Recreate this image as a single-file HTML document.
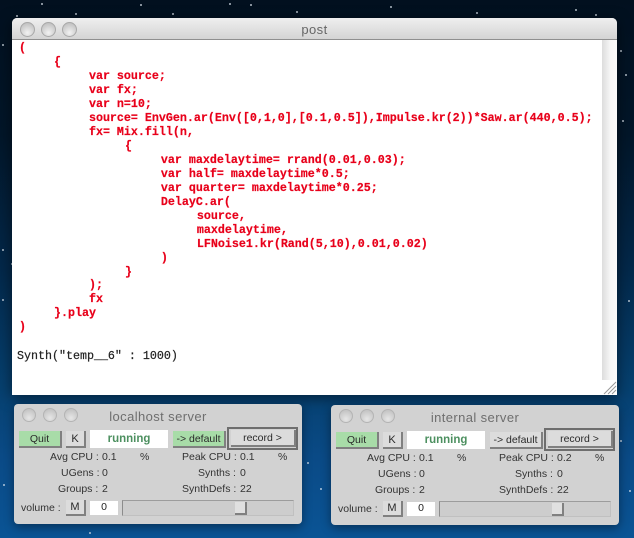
<!DOCTYPE html>
<html><head><meta charset="utf-8"><style>
html,body{margin:0;padding:0}
body{width:634px;height:538px;overflow:hidden;position:relative;font-family:"Liberation Sans",sans-serif;
background:linear-gradient(180deg,#02101f 0%,#021629 25%,#03284a 50%,#06406f 72%,#0a4a86 85%,#0a5495 100%)}
div{position:absolute;box-sizing:border-box}
.star{width:2px;height:2px;background:#dfe8f0;opacity:.6}
.post{left:12px;top:18px;width:605px;height:377px;background:#fff;border-radius:5px 5px 0 0;box-shadow:0 3px 14px rgba(0,0,0,.5)}
.tb{left:0;top:0;width:605px;height:22px;background:linear-gradient(#efefef,#d4d4d4);border-bottom:1px solid #8f8f8f;border-radius:5px 5px 0 0;text-align:center;font-size:13px;line-height:23px;color:#666;letter-spacing:.4px}
.dot{width:15px;height:15px;border-radius:50%;border:1px solid #a8a8a8;background:radial-gradient(circle at 50% 75%,#f2f2f2,#c8c8c8 70%,#b8b8b8);top:4px}
pre{position:absolute;margin:0;left:7px;top:24px;font:bold 11.67px/13.97px "Liberation Mono",monospace;color:#e8001a;-webkit-text-stroke:.2px #e8001a}
pre i{font-style:normal;display:inline-block}
.a{margin-left:1px}.c{margin-left:2px}.e{margin-left:3px}
pre.s{font-weight:normal;color:#222;top:332px;left:5px;-webkit-text-stroke:.2px #222}
.sb{left:590px;top:22px;width:15px;height:341px;background:linear-gradient(90deg,#dcdcdc,#f6f6f6 55%,#fafafa)}
.gr{left:590px;top:362px;width:15px;height:15px;background:#fff}
.srv{width:288px;height:120px;background:#d2d2d2;border-radius:4px;box-shadow:0 3px 10px rgba(0,0,0,.4)}
.t{left:0;width:288px;top:4px;font-size:13px;color:#6e6e6e;letter-spacing:.4px;line-height:17px;text-align:center;white-space:nowrap}
.d2{width:14px;height:14px;border-radius:50%;border:1px solid #b4b4b4;background:radial-gradient(circle at 50% 75%,#e6e6e6,#c6c6c6 75%);top:4px}
.b{height:17px;background:#dcdcdc;border-right:2px solid #808080;border-bottom:2px solid #808080;font-size:10.5px;line-height:16px;text-align:center;color:#2a2a2a;white-space:nowrap}
.g{background:#a8dca8}
.run{top:26px;height:18px;left:76px;width:78px;background:#fff;text-align:center;font-size:11.5px;font-weight:bold;color:#4d9060;line-height:18px}
.rec{left:213px;top:23px;width:71px;height:23px;border:2px solid #6e6e6e;background:#d2d2d2}
.rec .b{left:2px;top:1px;width:65px;height:17px}
.l{font-size:10.5px;color:#333;line-height:14px;white-space:nowrap}
.fld{background:#fff;font-size:10.5px;text-align:center;color:#222;line-height:13px;left:76px;top:97px;width:28px;height:14px}
.sl{left:108px;top:96px;width:172px;height:16px;background:#cdcdcd;border:1px solid #c0c0c0;border-left-color:#8c8c8c;border-top-color:#9c9c9c}
.th{width:12px;height:13px;top:1px;left:112px;background:#e0e0e0;border-right:2px solid #808080;border-bottom:2px solid #808080}
</style></head><body>
<div class="star" style="left:229px;top:3px"></div><div class="star" style="left:16px;top:15px"></div><div class="star" style="left:41px;top:3px"></div>
<div class="star" style="left:75px;top:13px"></div><div class="star" style="left:140px;top:4px"></div><div class="star" style="left:172px;top:13px"></div>
<div class="star" style="left:296px;top:11px"></div><div class="star" style="left:250px;top:4px"></div><div class="star" style="left:390px;top:6px"></div>
<div class="star" style="left:476px;top:12px"></div><div class="star" style="left:575px;top:9px"></div><div class="star" style="left:595px;top:14px"></div>
<div class="star" style="left:620px;top:50px"></div><div class="star" style="left:625px;top:74px"></div><div class="star" style="left:2px;top:44px"></div>
<div class="star" style="left:2px;top:299px"></div><div class="star" style="left:11px;top:263px"></div><div class="star" style="left:2px;top:249px"></div>
<div class="star" style="left:622px;top:120px"></div><div class="star" style="left:628px;top:300px"></div><div class="star" style="left:629px;top:490px"></div>
<div class="star" style="left:89px;top:532px"></div><div class="star" style="left:3px;top:484px"></div><div class="star" style="left:320px;top:488px"></div>
<div class="star" style="left:620px;top:440px"></div><div class="star" style="left:307px;top:462px"></div>

<div class="post">
<div class="tb">post</div>
<div class="dot" style="left:8px"></div><div class="dot" style="left:29px"></div><div class="dot" style="left:50px"></div>
<pre>(
     {
          var source;
          var fx;
          var n=10;
          source= EnvGen.ar(Env([0,1,0],[0.1,0.5]),Impulse.kr(2))*Saw.ar(440,0.5);
          fx= Mix.fill(n,
               <i class="a">{</i>
                    <i class="c">var maxdelaytime= rrand(0.01,0.03);</i>
                    <i class="c">var half= maxdelaytime*0.5;</i>
                    <i class="c">var quarter= maxdelaytime*0.25;</i>
                    <i class="c">DelayC.ar(</i>
                         <i class="e">source,</i>
                         <i class="e">maxdelaytime,</i>
                         <i class="e">LFNoise1.kr(Rand(5,10),0.01,0.02)</i>
                    <i class="c">)</i>
               <i class="a">}</i>
          );
          fx
     }.play
)</pre>
<pre class="s">Synth("temp__6" : 1000)</pre>
<div class="sb"></div>
<div class="gr"><svg width="15" height="15" style="display:block"><path d="M2 14L14 2M6 14L14 6M10 14L14 10" stroke="#999" fill="none"/></svg></div>
</div>

<div class="srv" style="left:14px;top:404px">
<div class="d2" style="left:8px"></div><div class="d2" style="left:29px"></div><div class="d2" style="left:50px"></div>
<div class="t">localhost server</div>
<div class="b g" style="left:5px;top:27px;width:43px">Quit</div>
<div class="b" style="left:52px;top:27px;width:20px;font-size:11px">K</div>
<div class="run">running</div>
<div class="b g" style="left:159px;top:27px;width:53px">-&gt; default</div>
<div class="rec"><div class="b">record &gt;</div></div>
<div class="l" style="left:36px;top:46px">Avg CPU :</div><div class="l" style="left:88px;top:46px">0.1</div><div class="l" style="left:126px;top:46px">%</div>
<div class="l" style="left:168px;top:46px">Peak CPU :</div><div class="l" style="left:226px;top:46px">0.1</div><div class="l" style="left:264px;top:46px">%</div>
<div class="l" style="left:47px;top:62px">UGens :</div><div class="l" style="left:88px;top:62px">0</div>
<div class="l" style="left:184px;top:62px">Synths :</div><div class="l" style="left:226px;top:62px">0</div>
<div class="l" style="left:44px;top:78px">Groups :</div><div class="l" style="left:88px;top:78px">2</div>
<div class="l" style="left:168px;top:78px">SynthDefs :</div><div class="l" style="left:226px;top:78px">22</div>
<div class="l" style="left:7px;top:97px">volume :</div>
<div class="b" style="left:52px;top:96px;width:20px;height:16px;line-height:15px;font-size:11px">M</div>
<div class="fld">0</div>
<div class="sl"><div class="th"></div></div>
</div>

<div class="srv" style="left:331px;top:405px">
<div class="d2" style="left:8px"></div><div class="d2" style="left:29px"></div><div class="d2" style="left:50px"></div>
<div class="t">internal server</div>
<div class="b g" style="left:5px;top:27px;width:43px">Quit</div>
<div class="b" style="left:52px;top:27px;width:20px;font-size:11px">K</div>
<div class="run">running</div>
<div class="b" style="left:159px;top:27px;width:53px">-&gt; default</div>
<div class="rec"><div class="b">record &gt;</div></div>
<div class="l" style="left:36px;top:46px">Avg CPU :</div><div class="l" style="left:88px;top:46px">0.1</div><div class="l" style="left:126px;top:46px">%</div>
<div class="l" style="left:168px;top:46px">Peak CPU :</div><div class="l" style="left:226px;top:46px">0.2</div><div class="l" style="left:264px;top:46px">%</div>
<div class="l" style="left:47px;top:62px">UGens :</div><div class="l" style="left:88px;top:62px">0</div>
<div class="l" style="left:184px;top:62px">Synths :</div><div class="l" style="left:226px;top:62px">0</div>
<div class="l" style="left:44px;top:78px">Groups :</div><div class="l" style="left:88px;top:78px">2</div>
<div class="l" style="left:168px;top:78px">SynthDefs :</div><div class="l" style="left:226px;top:78px">22</div>
<div class="l" style="left:7px;top:97px">volume :</div>
<div class="b" style="left:52px;top:96px;width:20px;height:16px;line-height:15px;font-size:11px">M</div>
<div class="fld">0</div>
<div class="sl"><div class="th"></div></div>
</div>
</body></html>
